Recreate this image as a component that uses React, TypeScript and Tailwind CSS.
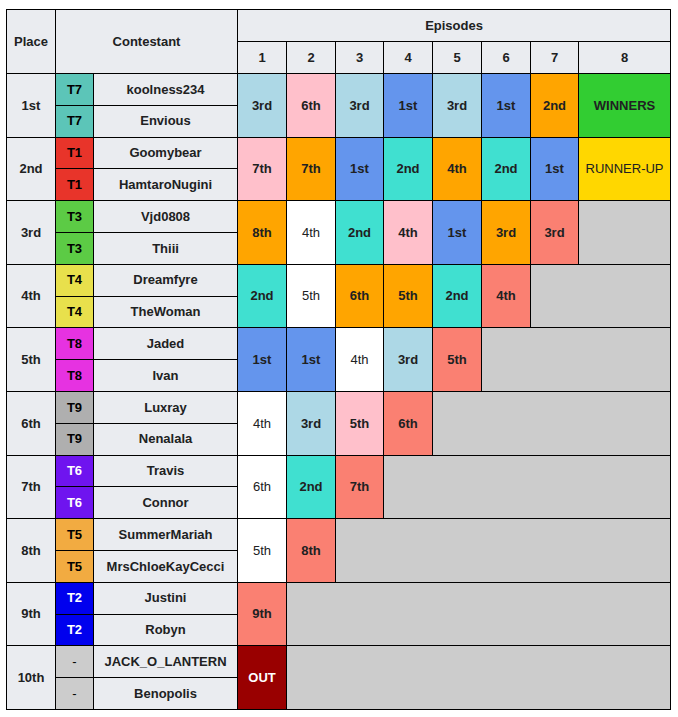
const teams: Record<string, { bg: string; fg: string }> = {
  T7: { bg: 'bg-[#5cc5b8]', fg: 'text-black font-bold' },
  T1: { bg: 'bg-[#e8342a]', fg: 'text-black font-bold' },
  T3: { bg: 'bg-[#5ccb45]', fg: 'text-black font-bold' },
  T4: { bg: 'bg-[#e8e04c]', fg: 'text-black font-bold' },
  T8: { bg: 'bg-[#e632e1]', fg: 'text-black font-bold' },
  T9: { bg: 'bg-[#afafaf]', fg: 'text-black font-bold' },
  T6: { bg: 'bg-[#6f14ef]', fg: 'text-white font-bold' },
  T5: { bg: 'bg-[#f2ab41]', fg: 'text-black font-bold' },
  T2: { bg: 'bg-[#0000ee]', fg: 'text-white font-bold' },
  '-': { bg: 'bg-[#cccccc]', fg: 'text-black font-normal' },
};

type Cell = { t: string; c: string };
const W = (t: string): Cell => ({ t, c: 'bg-white font-normal' });
const B = (t: string): Cell => ({ t, c: 'bg-[#6495ed] font-bold' });
const LB = (t: string): Cell => ({ t, c: 'bg-[#add8e6] font-bold' });
const P = (t: string): Cell => ({ t, c: 'bg-[#ffc0cb] font-bold' });
const O = (t: string): Cell => ({ t, c: 'bg-[#ffa500] font-bold' });
const TQ = (t: string): Cell => ({ t, c: 'bg-[#40e0d0] font-bold' });
const S = (t: string): Cell => ({ t, c: 'bg-[#fa8072] font-bold' });

const rows: { place: string; team: string; names: [string, string]; eps: Cell[] }[] = [
  {
    place: '1st', team: 'T7', names: ['koolness234', 'Envious'],
    eps: [LB('3rd'), P('6th'), LB('3rd'), B('1st'), LB('3rd'), B('1st'), O('2nd'), { t: 'WINNERS', c: 'bg-[#32cd32] font-bold' }],
  },
  {
    place: '2nd', team: 'T1', names: ['Goomybear', 'HamtaroNugini'],
    eps: [P('7th'), O('7th'), B('1st'), TQ('2nd'), O('4th'), TQ('2nd'), B('1st'), { t: 'RUNNER-UP', c: 'bg-[#ffd700] font-normal' }],
  },
  { place: '3rd', team: 'T3', names: ['Vjd0808', 'Thiii'], eps: [O('8th'), W('4th'), TQ('2nd'), P('4th'), B('1st'), O('3rd'), S('3rd')] },
  { place: '4th', team: 'T4', names: ['Dreamfyre', 'TheWoman'], eps: [TQ('2nd'), W('5th'), O('6th'), O('5th'), TQ('2nd'), S('4th')] },
  { place: '5th', team: 'T8', names: ['Jaded', 'Ivan'], eps: [B('1st'), B('1st'), W('4th'), LB('3rd'), S('5th')] },
  { place: '6th', team: 'T9', names: ['Luxray', 'Nenalala'], eps: [W('4th'), LB('3rd'), P('5th'), S('6th')] },
  { place: '7th', team: 'T6', names: ['Travis', 'Connor'], eps: [W('6th'), TQ('2nd'), S('7th')] },
  { place: '8th', team: 'T5', names: ['SummerMariah', 'MrsChloeKayCecci'], eps: [W('5th'), S('8th')] },
  { place: '9th', team: 'T2', names: ['Justini', 'Robyn'], eps: [S('9th')] },
  { place: '10th', team: '-', names: ['JACK_O_LANTERN', 'Benopolis'], eps: [{ t: 'OUT', c: 'bg-[#990000] text-white font-bold' }] },
];

const cell = 'border border-black text-center align-middle p-0';
const head = `${cell} bg-[#eaecf0] font-bold`;

export default function App() {
  return (
    <div className="bg-white w-[678px] h-[717px] pt-[9px] pl-[6px]" style={{ fontFamily: '"Liberation Sans", Arial, sans-serif' }}>
      <table className="border-collapse table-fixed w-[664px] text-[13px] text-[#202122]">
        <colgroup>
          <col className="w-[49px]" />
          <col className="w-[38px]" />
          <col className="w-[144px]" />
          <col className="w-[49px]" />
          <col className="w-[49px]" />
          <col className="w-[48px]" />
          <col className="w-[49px]" />
          <col className="w-[49px]" />
          <col className="w-[49px]" />
          <col className="w-[48px]" />
          <col className="w-[92px]" />
        </colgroup>
        <thead>
          <tr className="h-[32px]">
            <th rowSpan={2} className={head}>Place</th>
            <th rowSpan={2} colSpan={2} className={head}>Contestant</th>
            <th colSpan={8} className={head}>Episodes</th>
          </tr>
          <tr className="h-[32px]">
            {[1, 2, 3, 4, 5, 6, 7, 8].map((n) => (
              <th key={n} className={head}>{n}</th>
            ))}
          </tr>
        </thead>
        <tbody>
          {rows.map((r) => {
            const tm = teams[r.team];
            const rest = 8 - r.eps.length;
            return [0, 1].map((i) => (
              <tr key={r.place + i} className="h-[31.8px]">
                {i === 0 && (
                  <td rowSpan={2} className={head}>{r.place}</td>
                )}
                <td className={`${cell} ${tm.bg} ${tm.fg}`}>{r.team}</td>
                <td className={head}>{r.names[i]}</td>
                {i === 0 &&
                  r.eps.map((e, k) => (
                    <td key={k} rowSpan={2} className={`${cell} ${e.c}`}>{e.t}</td>
                  ))}
                {i === 0 && rest > 0 && (
                  <td rowSpan={2} colSpan={rest} className={`${cell} bg-[#cccccc]`}></td>
                )}
              </tr>
            ));
          })}
        </tbody>
      </table>
    </div>
  );
}
